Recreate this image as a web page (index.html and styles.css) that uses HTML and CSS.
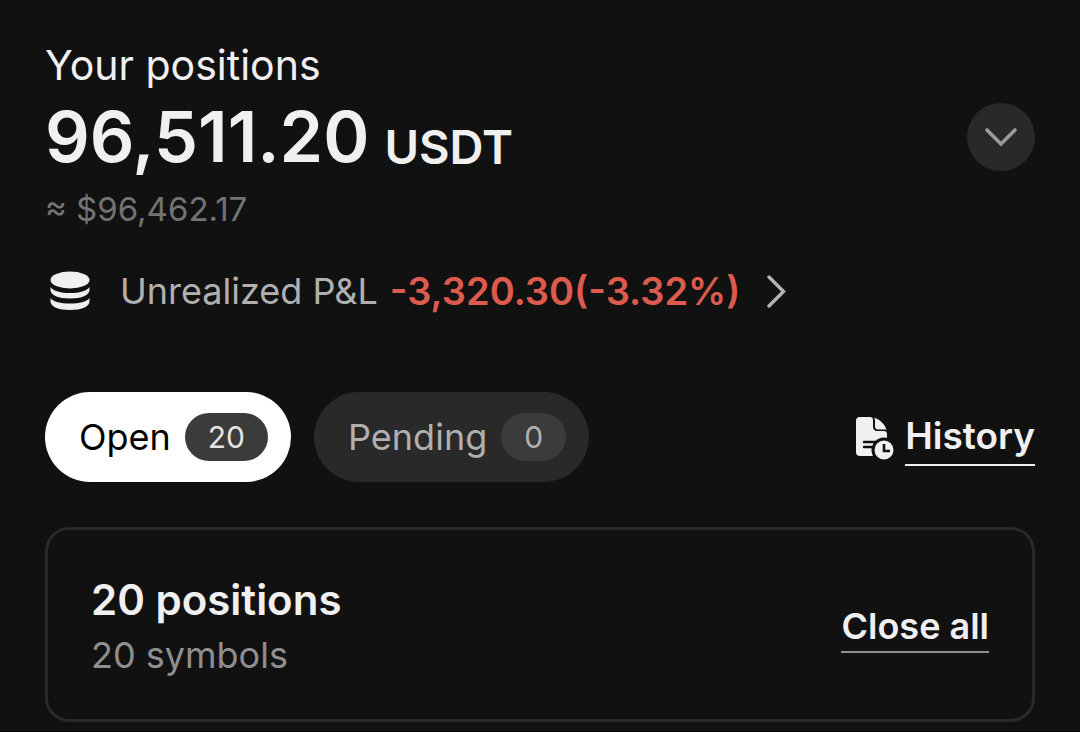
FILE: index.html
```
<!DOCTYPE html>
<html lang="en">
<head>
<meta charset="UTF-8">
<meta name="viewport" content="width=device-width, initial-scale=1.0">
<title>Your positions</title>
<link rel="stylesheet" href="styles.css">
</head>
<body>

<main class="page">
    <section class="summary">
        <div class="totals">
            <h1 class="title">Your positions</h1>
            <div class="amount">96,511.20 <span class="unit">USDT</span></div>
            <div class="approx">≈ $96,462.17</div>
        </div>
        <button class="toggle" type="button" aria-label="Show details">
            <svg width="34" height="20" viewBox="0 0 34 20" fill="none" stroke="#9a9a9a" stroke-width="3.6" stroke-linecap="round"><path d="M3 3l14 14L31 3"/></svg>
        </button>
    </section>

    <a class="pnl" href="#pnl">
        <svg width="40" height="40" viewBox="0 0 40 40" fill="#f0f0f0">
            <ellipse cx="20" cy="9" rx="19.5" ry="8.5"/>
            <path d="M.5 16c3 4 10 6 19.500 6s16.500-2 19.500-6v3c0 5-8 8.500-19.500 8.500S.5 24 .5 19z"/>
            <path d="M.5 27c3 4 10 5.500 19.500 5.500s16.500-1.500 19.500-5.500v3.500c0 5-8 8.500-19.500 8.500S.5 35.500 .5 30.500z"/>
        </svg>
        <span class="pnl-label">Unrealized P&amp;L</span>
        <span class="pnl-value">-3,320.30(-3.32%)</span>
        <svg width="20" height="34" viewBox="0 0 20 34" fill="none" stroke="#b4b4b4" stroke-width="3.4" stroke-linecap="round"><path d="M3 3l14.500 14.500L3 32"/></svg>
    </a>

    <div class="toolbar">
        <button class="tab active" type="button">Open <span class="count">20</span></button>
        <button class="tab" type="button">Pending <span class="count">0</span></button>
        <a class="history" href="#history">
            <svg width="40" height="46" viewBox="0 -2 40 46">
                <path fill="#f0f0f0" d="M5 1h10c2 0 3 1 3 3v6c0 4 2 5 5 5h6c2 0 3 1 3 3v22H5a4 4 0 0 1-4-4V5a4 4 0 0 1 4-4z"/>
                <path fill="#f0f0f0" d="M19 1.500c6 2 11 7 12.500 12H24c-3 0-4-1-4-4V6c0-2 0-3-1-4.500z"/>
                <path d="M9 26h12M9 31h8" fill="none" stroke="#111" stroke-width="2.4" stroke-linecap="round"/>
                <circle cx="29" cy="34" r="11" fill="#f0f0f0" stroke="#111" stroke-width="3"/>
                <path d="M29 28v7h6" fill="none" stroke="#111" stroke-width="2.600"/>
            </svg>
            <span class="history-text">History</span>
        </a>
    </div>

    <section class="card">
        <div>
            <h2 class="card-title">20 positions</h2>
            <div class="card-text">20 symbols</div>
        </div>
        <button class="close-all" type="button">Close all</button>
    </section>
</main>

</body>
</html>
```
FILE: styles.css
```
* {
    box-sizing: border-box;
}

body {
    margin: 0;
    background-color: #111;
    color: #f0f0f0;
    font-family: Inter, "Liberation Sans", sans-serif;
}

button {
    border: 0;
    font-family: inherit;
    cursor: pointer;
}

a {
    color: inherit;
    text-decoration: none;
}

.page {
    min-height: 100vh;
    padding: 40px 45px 8px;
    border-bottom: 1px solid #000;
}

.summary {
    display: flex;
    align-items: center;
    justify-content: space-between;
}

.title {
    margin: 0;
    font-size: 41px;
    line-height: 50px;
    font-weight: 400;
}

.amount {
    display: flex;
    align-items: flex-end;
    gap: 15px;
    font-size: 70px;
    line-height: 94px;
    font-weight: 600;
}

.unit {
    font-size: 47px;
    line-height: 75px;
}

.approx {
    font-size: 33px;
    line-height: 50px;
    color: #737373;
}

.toggle {
    display: flex;
    align-items: center;
    justify-content: center;
    width: 68px;
    height: 68px;
    border-radius: 50%;
    background-color: #292929;
}

.pnl {
    display: flex;
    align-items: center;
    margin-top: 33px;
    padding-left: 5px;
    font-size: 36px;
    line-height: 48px;
}

.pnl-label {
    margin: 0 12px 0 30px;
    color: #b0b0b0;
}

.pnl-value {
    margin-right: 26px;
    color: #dd5b4e;
    font-size: 38px;
    font-weight: 600;
}

.toolbar {
    display: flex;
    align-items: center;
    gap: 23px;
    margin-top: 77px;
}

.tab {
    display: flex;
    align-items: center;
    gap: 14px;
    height: 90px;
    padding: 0 23px 0 34px;
    border-radius: 45px;
    background-color: #292929;
    color: #b0b0b0;
    font-size: 36px;
}

.active {
    background-color: #fff;
    color: #000;
}

.count {
    padding: 0 23px;
    border-radius: 24px;
    background-color: #3b3b3b;
    color: #b0b0b0;
    font-size: 30px;
    line-height: 48px;
}

.active .count {
    color: #e4e4e4;
}

.history {
    display: flex;
    align-items: center;
    gap: 10px;
    margin-left: auto;
    font-size: 37px;
    line-height: 56px;
    font-weight: 600;
}

.history-text {
    border-bottom: 2px solid #f0f0f0;
}

.card {
    display: flex;
    align-items: center;
    justify-content: space-between;
    margin-top: 45px;
    padding: 42px 43px 37px;
    border: 3px solid #292929;
    border-radius: 24px;
}

.card-title {
    margin: 0;
    font-size: 42px;
    line-height: 56px;
    font-weight: 600;
}

.card-text {
    color: #8f8f8f;
    font-size: 36px;
    line-height: 54px;
}

.close-all {
    padding: 0;
    border-bottom: 2px solid #8f8f8f;
    background: none;
    color: #f0f0f0;
    font-size: 36px;
    line-height: 50px;
    font-weight: 600;
}
```
